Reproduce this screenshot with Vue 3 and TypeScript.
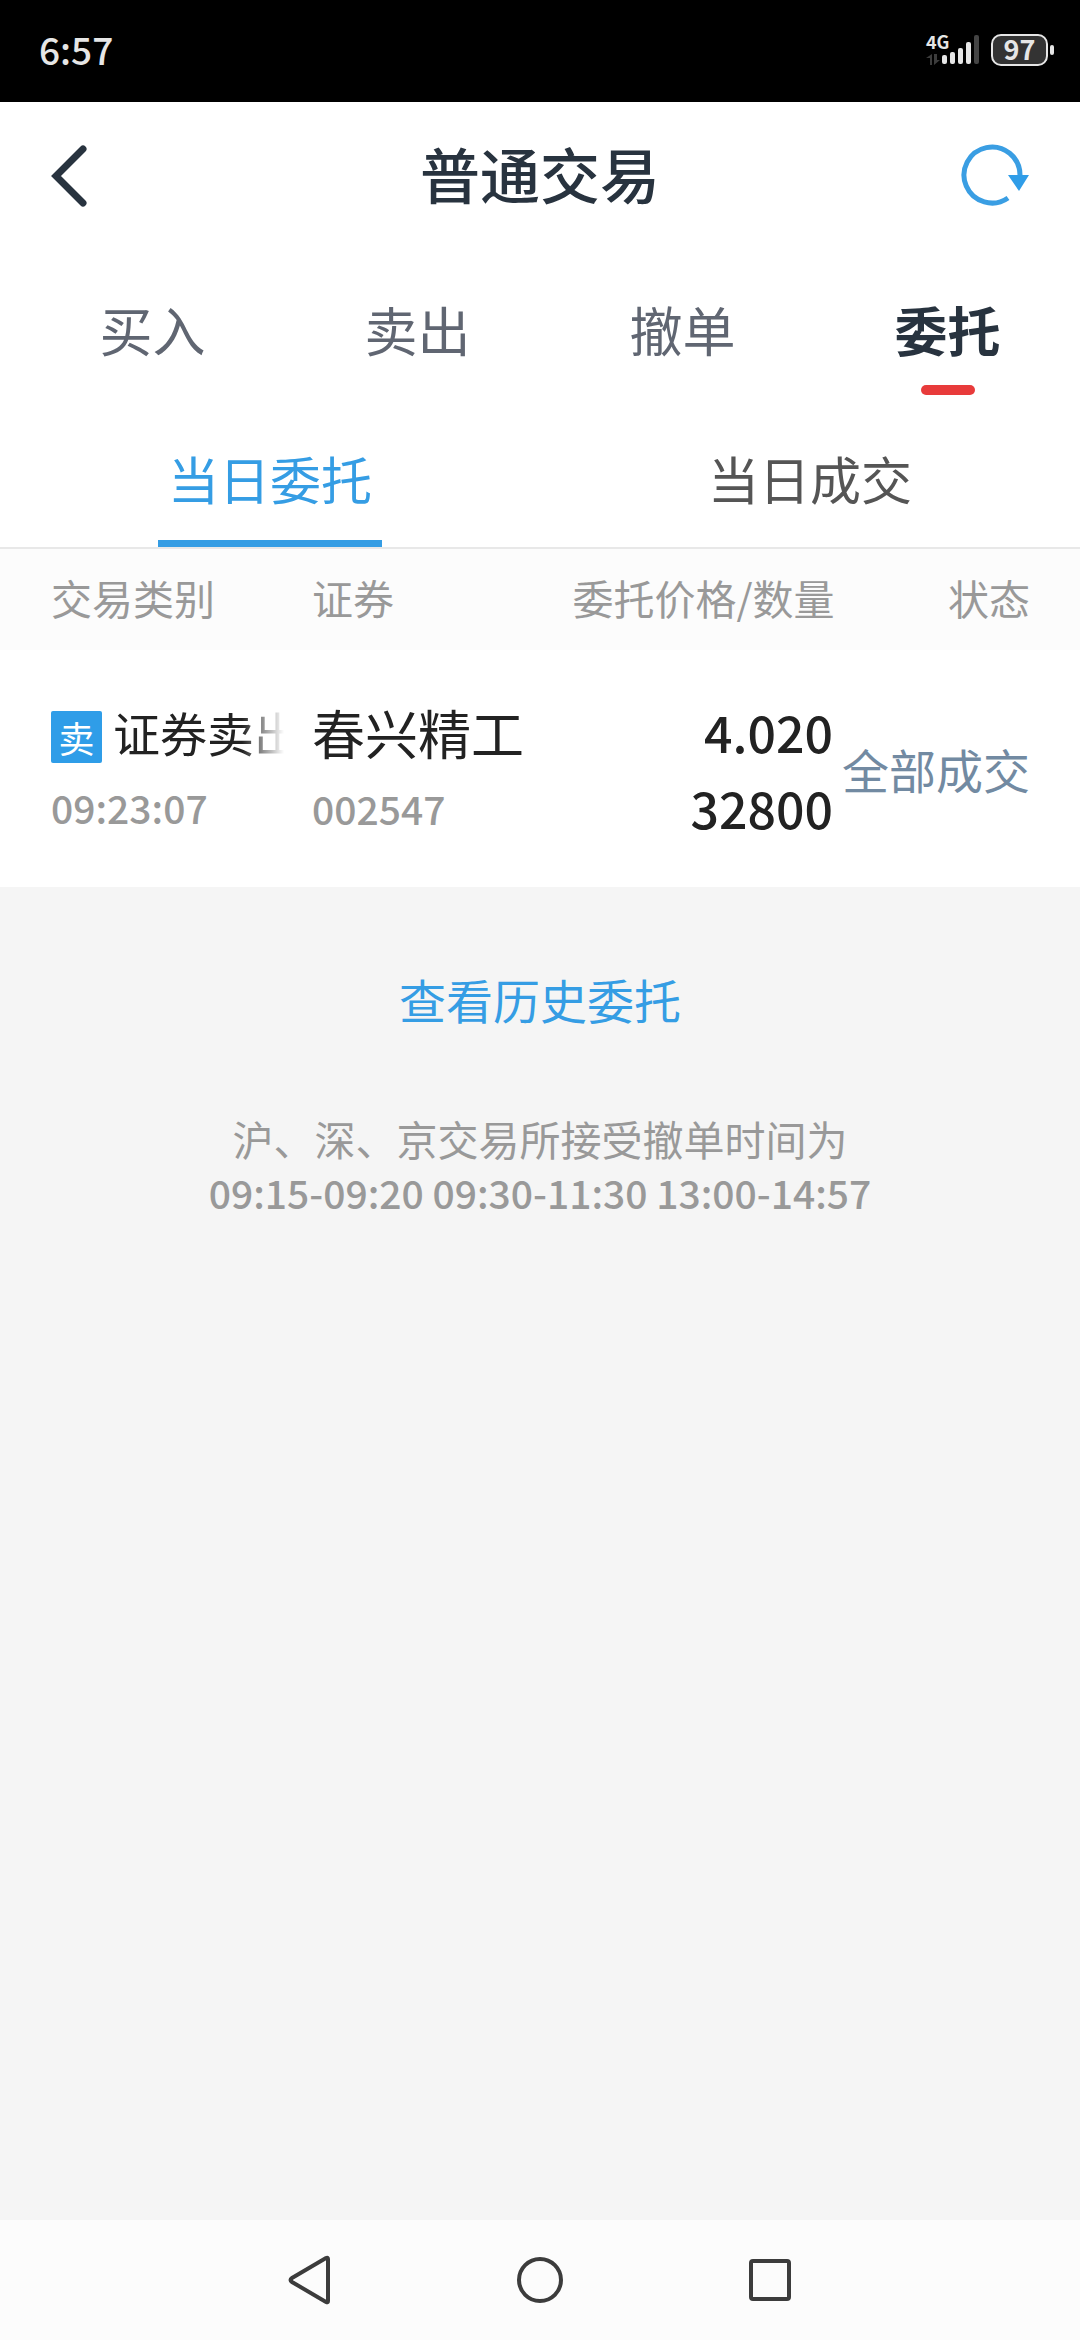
<script setup lang="ts">
import { ref } from 'vue'

interface Order {
  id: number
  badge: string
  type: string
  time: string
  name: string
  code: string
  price: string
  amount: string
  status: string
}

const tabs: string[] = ['买入', '卖出', '撤单', '委托']
const activeTab = ref<string>('委托')

const subTabs: string[] = ['当日委托', '当日成交']
const activeSubTab = ref<string>('当日委托')

const orders: Order[] = [
  {
    id: 1,
    badge: '卖',
    type: '证券卖出',
    time: '09:23:07',
    name: '春兴精工',
    code: '002547',
    price: '4.020',
    amount: '32800',
    status: '全部成交',
  },
]
</script>

<template>
  <div class="screen">
    <div class="status-bar">
      <span class="clock">6:57</span>
      <div class="status-icons">
        <div class="network">
          <span class="network-type">4G</span>
          <svg class="signal" width="54" height="30" viewBox="0 0 54 30" aria-hidden="true">
            <path d="M4 30V23H0l6-4v11zM8 19v11l6-5h-3v-6z" fill="#3c3c3c" />
            <rect x="16" y="20" width="5" height="9" rx="2" fill="#e6e6e6" />
            <rect x="24" y="17" width="5" height="12" rx="2" fill="#e6e6e6" />
            <rect x="32" y="13" width="5" height="16" rx="2" fill="#e6e6e6" />
            <rect x="40" y="7" width="5" height="22" rx="2" fill="#e6e6e6" />
            <rect x="48" y="0" width="5" height="29" rx="2" fill="#444" />
          </svg>
        </div>
        <div class="battery"><span class="battery-level">97</span></div>
        <span class="battery-nub"></span>
      </div>
    </div>

    <header class="title-bar">
      <button class="icon-button" type="button" aria-label="返回">
        <svg width="40" height="72" viewBox="0 1 40 72" fill="none" aria-hidden="true">
          <path d="M32 13L5 40l27 27" stroke="#28333f" stroke-width="7" stroke-linecap="round" />
        </svg>
      </button>
      <h1 class="title">普通交易</h1>
      <button class="icon-button" type="button" aria-label="刷新">
        <svg width="70" height="70" viewBox="0 2 70 70" fill="none" aria-hidden="true">
          <path d="M61 39A28 28 0 1 0 49 62" stroke="#3a9ee3" stroke-width="5" />
          <path d="M49 39h21L60 55z" fill="#2f9de8" />
        </svg>
      </button>
    </header>

    <nav class="tabs">
      <button
        v-for="tab in tabs"
        :key="tab"
        type="button"
        class="tab"
        :class="{ active: tab === activeTab }"
        @click="activeTab = tab"
      >
        {{ tab }}
      </button>
    </nav>

    <nav class="sub-tabs">
      <button
        v-for="tab in subTabs"
        :key="tab"
        type="button"
        class="sub-tab"
        :class="{ active: tab === activeSubTab }"
        @click="activeSubTab = tab"
      >
        {{ tab }}
      </button>
    </nav>

    <main class="content">
      <table class="orders">
        <thead>
          <tr>
            <th class="col-type" scope="col">交易类别</th>
            <th class="col-stock" scope="col">证券</th>
            <th class="col-price" scope="col">委托价格/数量</th>
            <th class="col-status" scope="col">状态</th>
          </tr>
        </thead>
        <tbody>
          <tr v-for="order in orders" :key="order.id">
            <td class="col-type">
              <div class="type-line">
                <span class="badge">{{ order.badge }}</span>
                <span class="type">{{ order.type }}</span>
              </div>
              <div class="minor">{{ order.time }}</div>
            </td>
            <td class="col-stock">
              <div class="name">{{ order.name }}</div>
              <div class="minor">{{ order.code }}</div>
            </td>
            <td class="col-price">
              <div class="figure">{{ order.price }}</div>
              <div class="figure">{{ order.amount }}</div>
            </td>
            <td class="col-status status">{{ order.status }}</td>
          </tr>
        </tbody>
      </table>

      <div class="footer">
        <a class="history" href="#">查看历史委托</a>
        <div class="note">
          <p>沪、深、京交易所接受撤单时间为</p>
          <p class="hours">09:15-09:20 09:30-11:30 13:00-14:57</p>
        </div>
      </div>
    </main>

    <div class="nav-bar">
      <button class="nav-button" type="button" aria-label="返回">
        <svg width="50" height="50" viewBox="0 0 50 50" fill="none" aria-hidden="true">
          <path d="M43 4V46Q43 48 41 47L7 27Q4 25 7 23L41 3Q43 2 43 4Z" stroke="#3c3c3c" stroke-width="4" />
        </svg>
      </button>
      <button class="nav-button" type="button" aria-label="主页">
        <svg width="50" height="50" viewBox="0 0 50 50" fill="none" aria-hidden="true">
          <circle cx="25" cy="25" r="21" stroke="#3c3c3c" stroke-width="4" />
        </svg>
      </button>
      <button class="nav-button" type="button" aria-label="最近任务">
        <svg width="50" height="50" viewBox="0 0 50 50" fill="none" aria-hidden="true">
          <rect x="6" y="6" width="38" height="38" rx="2" stroke="#3c3c3c" stroke-width="4" />
        </svg>
      </button>
    </div>
  </div>
</template>

<style>
body {
  margin: 0;
  background: #f5f5f5;
}
</style>

<style scoped>
.screen {
  display: flex;
  flex-direction: column;
  min-height: 100vh;
  background: #f5f5f5;
  font-family: 'Noto Sans CJK SC', sans-serif;
  color: #222;
}

button {
  margin: 0;
  padding: 0;
  border: 0;
  background: none;
  font-family: inherit;
}

.status-bar {
  display: flex;
  align-items: center;
  justify-content: space-between;
  height: 102px;
  padding: 0 26px 0 39px;
  box-sizing: border-box;
  background: #000;
  color: #e6e6e6;
}

.clock {
  font-size: 37px;
  font-weight: 500;
  line-height: 98px;
  padding-bottom: 4px;
}

.status-icons {
  display: flex;
  align-items: center;
  padding-bottom: 2px;
}

.network {
  position: relative;
  display: flex;
  margin-right: 11px;
}

.network-type {
  position: absolute;
  top: -4px;
  left: 0;
  font-size: 18px;
  font-weight: 700;
  line-height: 20px;
}

.signal {
  display: block;
}

.battery {
  width: 57px;
  height: 32px;
  box-sizing: border-box;
  border: 2px solid #e6e6e6;
  border-radius: 10px;
  background: #333;
  text-align: center;
}

.battery-level {
  display: block;
  font-size: 27px;
  font-weight: 700;
  line-height: 26px;
}

.battery-nub {
  width: 4px;
  height: 10px;
  margin-left: 2px;
  border-radius: 2px;
  background: #e6e6e6;
}

.title-bar {
  display: grid;
  grid-template-columns: 1fr auto 1fr;
  align-items: center;
  height: 142px;
  padding: 0 51px;
  background: #fff;
}

.icon-button {
  display: flex;
  justify-self: start;
}

.icon-button:last-child {
  justify-self: end;
}

.title {
  margin: 0;
  font-size: 60px;
  font-weight: 500;
  line-height: 80px;
  color: #28333f;
}

.tabs {
  display: flex;
  padding: 48px 0 0 20px;
  background: #fff;
}

.tab {
  display: flex;
  flex: 1;
  flex-direction: column;
  align-items: center;
  font-size: 53px;
  line-height: 74px;
  color: #606672;
}

.tab::after {
  content: '';
  width: 54px;
  height: 10px;
  margin-top: 19px;
  border-radius: 5px;
}

.tab.active {
  font-weight: 700;
  color: #28333f;
}

.tab.active::after {
  background: #e83b3b;
}

.sub-tabs {
  display: flex;
  padding-top: 48px;
  border-bottom: 2px solid #e8e8e8;
  background: #fff;
}

.sub-tab {
  display: flex;
  flex: 1;
  flex-direction: column;
  align-items: center;
  font-size: 51px;
  line-height: 70px;
  color: #555;
}

.sub-tab::after {
  content: '';
  width: 224px;
  height: 7px;
  margin-top: 27px;
}

.sub-tab.active {
  color: #359de4;
}

.sub-tab.active::after {
  background: #359de4;
}

.content {
  flex: 1;
}

.orders {
  width: 100%;
  border-spacing: 0;
  table-layout: fixed;
}

.orders th,
.orders td {
  padding: 0;
  text-align: left;
  vertical-align: middle;
  white-space: nowrap;
}

.orders th {
  padding: 18px 0 23px;
  background: #fcfcfc;
  font-size: 41px;
  font-weight: 400;
  line-height: 60px;
  color: #999;
}

.orders td {
  height: 237px;
  background: #fff;
}

.orders .col-type {
  width: 233px;
  padding-left: 51px;
  padding-right: 28px;
}

.orders .col-price {
  text-align: right;
}

.orders .col-status {
  width: 197px;
  padding-right: 50px;
  text-align: right;
}

.type-line {
  display: flex;
  align-items: flex-start;
  gap: 11px;
  height: 62px;
}

.badge {
  flex: none;
  align-self: flex-end;
  width: 51px;
  height: 52px;
  border-radius: 2px;
  background: #2f9de8;
  font-size: 36px;
  line-height: 52px;
  text-align: center;
  color: #fff;
}

.type {
  flex: 1;
  overflow: hidden;
  font-size: 47px;
  line-height: 62px;
  mask-image: linear-gradient(to right, #000 calc(100% - 42px), transparent);
}

.minor {
  margin-top: 14px;
  font-size: 39px;
  font-weight: 500;
  line-height: 60px;
  color: #999;
}

.name {
  font-size: 53px;
  line-height: 64px;
}

.figure {
  font-size: 50px;
  font-weight: 500;
  line-height: 76px;
}

.orders .status {
  font-size: 47px;
  line-height: 60px;
  color: #728aa2;
}

.footer {
  display: flex;
  flex-direction: column;
  align-items: center;
  padding: 82px 24px;
}

.history {
  font-size: 47px;
  line-height: 60px;
  color: #359de4;
  text-decoration: none;
}

.note {
  margin-top: 82px;
  font-size: 41px;
  line-height: 54px;
  text-align: center;
  color: #999;
}

.note p {
  margin: 0;
}

.note .hours {
  font-size: 39px;
  font-weight: 500;
}

.nav-bar {
  display: flex;
  align-items: center;
  justify-content: center;
  gap: 180px;
  height: 120px;
  background: #fcfcfc;
}

.nav-button {
  display: flex;
}
</style>
